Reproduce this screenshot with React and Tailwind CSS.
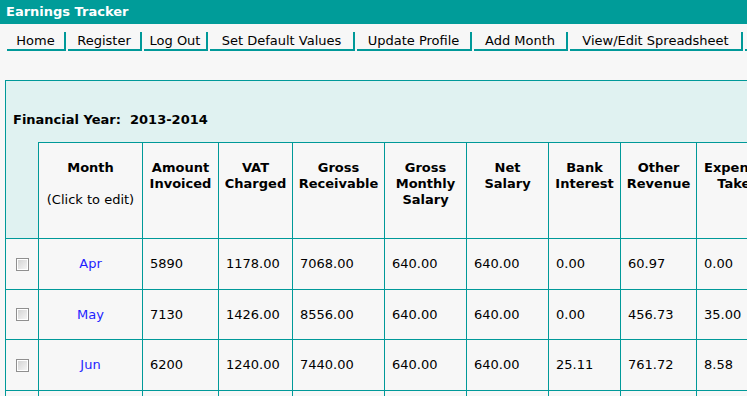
import React from 'react';

const navItems = [
  { label: 'Home', w: 'w-[59px]' },
  { label: 'Register', w: 'w-[74px]' },
  { label: 'Log Out', w: 'w-[64px]' },
  { label: 'Set Default Values', w: 'w-[145px]' },
  { label: 'Update Profile', w: 'w-[115px]' },
  { label: 'Add Month', w: 'w-[94px]' },
  { label: 'View/Edit Spreadsheet', w: 'w-[173px]' },
  { label: 'Reports', w: 'w-[120px]' },
];

const headers = [
  ['Amount', 'Invoiced'],
  ['VAT', 'Charged'],
  ['Gross', 'Receivable'],
  ['Gross', 'Monthly', 'Salary'],
  ['Net', 'Salary'],
  ['Bank', 'Interest'],
  ['Other', 'Revenue'],
  ['Expenses', 'Taken'],
  ['Net', 'Earnings'],
];

const rows = [
  { month: 'Apr', h: 'h-[51px]', vals: ['5890', '1178.00', '7068.00', '640.00', '640.00', '0.00', '60.97', '0.00', '6428.00'] },
  { month: 'May', h: 'h-[50px]', vals: ['7130', '1426.00', '8556.00', '640.00', '640.00', '0.00', '456.73', '35.00', '7916.00'] },
  { month: 'Jun', h: 'h-[51px]', vals: ['6200', '1240.00', '7440.00', '640.00', '640.00', '25.11', '761.72', '8.58', '6800.00'] },
  { month: 'Jul', h: 'h-[51px]', vals: ['6450', '1290.00', '7740.00', '640.00', '640.00', '0.00', '120.40', '12.00', '7100.00'] },
];

const grid = 'grid grid-cols-[33px_104px_76px_74px_92px_82px_82px_72px_76px_84px_90px]';

function Checkbox() {
  return (
    <span className="block w-[13px] h-[13px] border border-[#8f8f8f] bg-white p-px">
      <span className="block w-full h-full bg-gradient-to-br from-[#d4d4d4] to-[#f4f4f4]" />
    </span>
  );
}

export default function App() {
  return (
    <div className="min-h-screen w-full overflow-hidden bg-[#f7f7f7] text-[13px] text-black" style={{ fontFamily: '"DejaVu Sans", Verdana, sans-serif' }}>
      <div className="h-[24px] bg-[#009c99] px-[6px] flex items-center text-white font-bold">
        Earnings Tracker
      </div>

      {/* nav */}
      <div className="flex gap-[2px] pl-[7px] mt-[8px] whitespace-nowrap">
        {navItems.map((n) => (
          <div key={n.label} className={`${n.w} shrink-0 h-[19px] border-r-2 border-b-2 border-[#009999] flex items-center justify-center leading-none`}>
            {n.label}
          </div>
        ))}
      </div>

      {/* panel */}
      <div className="mt-[29px] ml-[5px] w-[1000px] border-l border-t border-[#009999] bg-[#e0f2f1]">
        <div className="h-[61px] pl-[7px] pt-[31px] font-bold leading-[16px] whitespace-pre">
          Financial Year:  2013-2014
        </div>

        <div className={grid}>
          {/* header */}
          <div className="h-[97px] border-r border-b border-[#009999]" />
          <div className="h-[97px] border-t border-r border-b border-[#009999] bg-[#f7f7f7] pt-[17px] text-center leading-[16px]">
            <div className="font-bold">Month</div>
            <div>&nbsp;</div>
            <div>(Click to edit)</div>
          </div>
          {headers.map((h, i) => (
            <div key={i} className="h-[97px] border-t border-r border-b border-[#009999] bg-[#f7f7f7] pt-[17px] text-center font-bold leading-[16px] whitespace-nowrap">
              {h.map((l) => (
                <div key={l}>{l}</div>
              ))}
            </div>
          ))}

          {/* rows */}
          {rows.map((r) => (
            <React.Fragment key={r.month}>
              <div className={`${r.h} border-r border-b border-[#009999] bg-[#f7f7f7] flex items-center justify-center`}>
                <Checkbox />
              </div>
              <div className={`${r.h} border-r border-b border-[#009999] bg-[#f7f7f7] flex items-center justify-center text-[#1f1fff]`}>
                {r.month}
              </div>
              {r.vals.map((v, i) => (
                <div key={i} className={`${r.h} border-r border-b border-[#009999] bg-[#f7f7f7] flex items-center pl-[7px]`}>
                  {v}
                </div>
              ))}
            </React.Fragment>
          ))}
        </div>
      </div>
    </div>
  );
}
